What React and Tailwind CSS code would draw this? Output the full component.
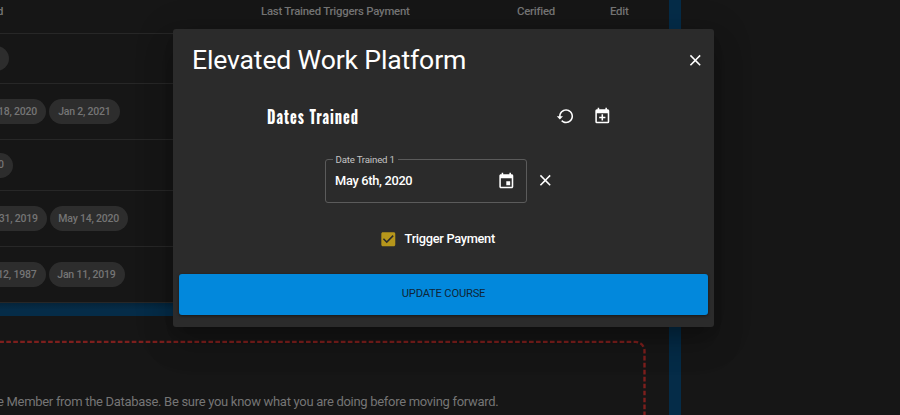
import React from "react";

const DATE_ROWS = [
  { height: "h-[50px]", chips: [["w-[29px]", ""]] },
  { height: "h-[56px]", chips: [["w-[66.3px]", "18, 2020"], ["w-[70.5px]", "Jan 2, 2021"]] },
  { height: "h-[51px]", chips: [["w-[33px]", "0"]] },
  { height: "h-[56px]", chips: [["w-[67px]", "31, 2019"], ["w-[78.3px]", "May 14, 2020"]] },
  { height: "h-[56px]", chips: [["w-[65.7px]", "12, 1987"], ["w-[76px]", "Jan 11, 2019"]] },
];

function Icon({ d, className }) {
  return (
    <svg viewBox="0 0 24 24" fill="currentColor" className={"shrink-0 " + className}>
      <path d={d} />
    </svg>
  );
}

const CLOSE = "M19 6.41 17.59 5 12 10.59 6.41 5 5 6.41 10.59 12 5 17.59 6.41 19 12 13.41 17.59 19 19 17.59 13.41 12z";
const RESTORE = "M13 3c-4.97 0-9 4.03-9 9H1l4 3.99L9 12H6c0-3.87 3.13-7 7-7s7 3.13 7 7-3.13 7-7 7c-1.93 0-3.68-.79-4.94-2.06l-1.42 1.42C8.27 19.99 10.51 21 13 21c4.97 0 9-4.03 9-9s-4.03-9-9-9z";
const EVENT = "M17 12h-5v5h5v-5zM16 1v2H8V1H6v2H5c-1.11 0-1.99.9-1.99 2L3 19c0 1.1.89 2 2 2h14c1.1 0 2-.9 2-2V5c0-1.1-.9-2-2-2h-1V1h-2zm3 18H5V8h14v11z";
const EVENT_PLUS = "M19 19V8H5v11h14M16 1h2v2h1a2 2 0 0 1 2 2v14a2 2 0 0 1-2 2H5a2 2 0 0 1-2-2V5a2 2 0 0 1 2-2h1V1h2v2h8V1m-5 8.5h2v3h3v2h-3v3h-2v-3H8v-2h3v-3z";
const CHECKED = "M19 3H5c-1.11 0-2 .9-2 2v14c0 1.1.89 2 2 2h14c1.11 0 2-.9 2-2V5c0-1.1-.89-2-2-2zm-9 14-5-5 1.41-1.41L10 14.17l7.59-7.59L19 8l-9 9z";

function Background() {
  return (
    <div className="flex h-[415px] w-[681px] flex-col border-r-12 border-[#052c48] text-[#757575]">
      <div className="flex h-[34px] shrink-0 items-start border-b border-[#272727] pt-[4px] text-[11.4px] leading-[15px] font-medium tracking-[-0.24px] whitespace-nowrap">
        <span className="flex w-[261px] justify-start">
          <span className="-ml-[3px]">d</span>
        </span>
        <span className="w-[256px]">Last Trained Triggers Payment</span>
        <span className="w-[93px]">Cerified</span>
        <span>Edit</span>
      </div>
      {DATE_ROWS.map((row, i) => (
        <div key={i} className={"-ml-[20px] flex shrink-0 items-center gap-[3px] border-b border-[#272727] " + row.height}>
          {row.chips.map(([width, text], j) => (
            <span
              key={j}
              className={
                "flex h-[25px] shrink-0 items-center justify-end rounded-full bg-[#2d2d2d] pr-[9.3px] text-[10.5px] font-medium tracking-[-0.22px] whitespace-nowrap " +
                width
              }
            >
              {text}
            </span>
          ))}
        </div>
      ))}
      <div className="h-[12.5px] shrink-0 bg-linear-to-b from-[#05243a] to-[#052c48] to-50%" />
      <div className="relative mt-[24px] h-[75px]">
        <svg className="absolute top-0 left-0 h-[75px] w-[650px]" fill="none">
          <path d="M0 1.9H635.5a9 9 0 0 1 9 9V80" stroke="#7d1f1d" strokeWidth="2.4" strokeDasharray="4.66 2.31" strokeDashoffset="0.7" />
        </svg>
        <p className="-ml-[3px] pt-[53px] text-[13px] leading-[18px] tracking-[-0.3px] whitespace-nowrap">
          e Member from the Database. Be sure you know what you are doing before moving forward.
        </p>
      </div>
    </div>
  );
}

function Dialog() {
  return (
    <div className="absolute top-[29px] left-[173px] flex h-[298px] w-[541px] flex-col rounded-[3px] bg-[#2b2b2b] text-white shadow-[0_9px_12px_-5px_rgba(0,0,0,0.2),0_19px_30px_2px_rgba(0,0,0,0.14),0_7px_36px_6px_rgba(0,0,0,0.12)]">
      <div className="flex h-[62px] shrink-0 items-center justify-between pr-[9px] pl-[19px]">
        <h1 className="text-[26.6px] leading-[32px] tracking-[-0.16px]">Elevated Work Platform</h1>
        <Icon d={CLOSE} className="size-[18.6px]" />
      </div>
      <div className="flex h-[50px] shrink-0 items-center pl-[94px]">
        <h2 className="w-[289px] origin-left scale-x-[0.81] font-['Oswald','Roboto',sans-serif] text-[17.8px] font-bold tracking-[1.2px] whitespace-nowrap">
          Dates Trained
        </h2>
        <Icon d={RESTORE} className="size-[18.6px]" />
        <Icon d={EVENT_PLUS} className="ml-[18px] size-[18.6px]" />
      </div>
      <div className="flex h-[79px] shrink-0 items-center pl-[151.5px]">
        <fieldset className="-mt-[5px] h-[49px] w-[202px] rounded-[3px] border border-[#5b5b5b] pl-[7px]">
          <legend className="h-[12px] px-[3px] text-[9.7px] leading-[12px] tracking-[-0.2px] text-[#c4c4c4]">Date Trained 1</legend>
          <div className="flex h-[31px] items-center justify-between pr-[10px] pl-[2.5px]">
            <span className="text-[12.8px] font-medium tracking-[-0.3px]">May 6th, 2020</span>
            <Icon d={EVENT} className="size-[18.6px]" />
          </div>
        </fieldset>
        <Icon d={CLOSE} className="ml-[9px] size-[18.6px]" />
      </div>
      <label className="flex h-[38px] shrink-0 items-center gap-[7px] pl-[206px] text-[12.8px] font-medium tracking-[-0.3px]">
        <Icon d={CHECKED} className="size-[18.6px] text-[#b6961b]" />
        Trigger Payment
      </label>
      <button className="mx-[6px] mt-[16px] h-[40.5px] shrink-0 rounded-[3px] bg-[#0288dc] text-[11.2px] tracking-[-0.2px] text-[#0f2638] shadow-[0_1px_3px_rgba(0,0,0,0.5)]">
        UPDATE COURSE
      </button>
    </div>
  );
}

export default function App() {
  return (
    <div className="relative h-[415px] w-[900px] overflow-hidden bg-[#161616] font-['Roboto',sans-serif]">
      <Background />
      <Dialog />
    </div>
  );
}
